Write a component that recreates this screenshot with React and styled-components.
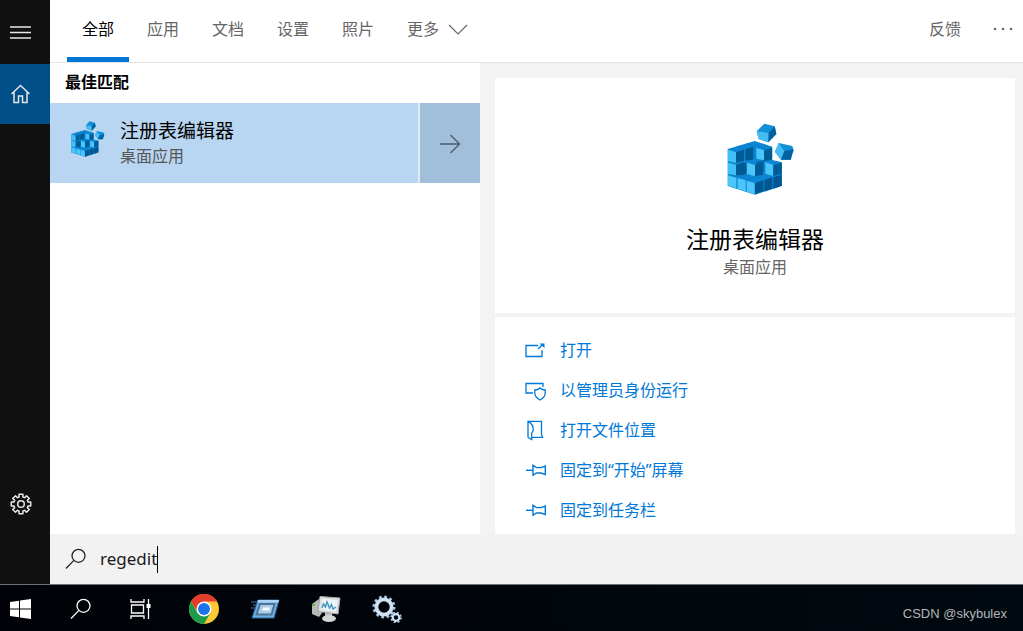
import React, { useState } from 'react';

import styled, { createGlobalStyle } from 'styled-components';

const GlobalStyle = createGlobalStyle`
  * {
    box-sizing: border-box;
  }

  body {
    margin: 0;
    font-family: "Noto Sans", "Noto Sans CJK SC", sans-serif;
    font-size: 16px;
    line-height: 24px;
    color: #000;
  }

  button, input {
    margin: 0;
    padding: 0;
    border: 0;
    background: none;
    font: inherit;
    color: inherit;
  }

  svg {
    display: block;
    flex: none;
  }
`;

const Screen = styled.div`
  display: flex;
  flex-direction: column;
  min-height: 100vh;
`;

const StartPanel = styled.div`
  display: flex;
  flex: 1;
`;

/* left rail */
const Rail = styled.nav`
  display: flex;
  flex-direction: column;
  width: 50px;
  padding-bottom: 50px;
  background: #101010;
`;

const RailButton = styled.button`
  display: flex;
  align-items: center;
  padding-left: 10px;
  height: ${(props) => (props.$tall ? '64px' : '60px')};
  background: ${(props) => (props.$active ? '#004e88' : 'transparent')};
  margin-top: ${(props) => (props.$bottom ? 'auto' : '0')};
  color: #e6e6e6;
`;

const Main = styled.div`
  display: flex;
  flex-direction: column;
  flex: 1;
  min-width: 0;
`;

/* tabs on top */
const TabBar = styled.header`
  display: flex;
  gap: 3px;
  height: 63px;
  padding: 0 8px 0 17px;
  background: #fff;
  border-bottom: 1px solid #e2e2e2;
`;

const Tab = styled.button`
  display: flex;
  align-items: center;
  gap: 9px;
  padding: 0 15px;
  border-bottom: 5px solid ${(props) => (props.$active ? '#0078d7' : 'transparent')};
  color: ${(props) => (props.$active ? '#000' : '#666')};
`;

const TabTools = styled.div`
  display: flex;
  gap: 16px;
  margin-left: auto;
  padding-bottom: 5px;
`;

const ToolButton = styled.button`
  display: flex;
  align-items: center;
  color: #666;
`;

const Body = styled.div`
  display: flex;
  flex: 1;
  background: #f3f3f3;
`;

const Results = styled.section`
  flex: 0 0 430px;
  background: #fff;
`;

const GroupTitle = styled.h2`
  margin: 0;
  padding: 7px 15px 9px;
  font-size: 16px;
  line-height: 24px;
  font-weight: 700;
`;

const ResultRow = styled.div`
  display: flex;
  gap: 2px;
  height: 80px;
  background: #dcebf8;
`;

const ResultItem = styled.button`
  display: flex;
  align-items: center;
  flex: 1;
  gap: 15px;
  padding: 0 15px;
  background: #b8d5f1;
  text-align: left;
`;

const ResultIcon = styled.span`
  align-self: flex-start;
  padding-top: 18px;
`;

const ResultName = styled.span`
  display: block;
  font-size: 19px;
  line-height: 26px;
`;

const ResultKind = styled.span`
  display: block;
  color: #555;
`;

const ResultOpen = styled.button`
  display: flex;
  align-items: center;
  justify-content: center;
  width: 60px;
  background: #a1bfda;
  color: #4a5c6b;
`;

/* right side */
const Details = styled.section`
  display: flex;
  flex-direction: column;
  flex: 1;
  gap: 4px;
  padding: 15px 8px 0 15px;
`;

const AppCard = styled.div`
  display: flex;
  flex-direction: column;
  align-items: center;
  height: 235px;
  padding-top: 45px;
  background: #fff;
`;

const AppName = styled.h1`
  margin: 20px 0 0;
  font-size: 23px;
  line-height: 32px;
  font-weight: 400;
`;

const AppKind = styled.span`
  color: #666;
`;

const ActionCard = styled.div`
  display: flex;
  flex-direction: column;
  flex: 1;
  padding: 13px 0 4px 30px;
  background: #fff;
`;

const Action = styled.button`
  display: flex;
  align-items: center;
  gap: 13px;
  height: 40px;
  color: #0078d7;
`;

const SearchBar = styled.label`
  display: flex;
  align-items: center;
  height: 50px;
  padding-left: 15px;
  background: #f2f2f2;
  color: #222;
`;

const SearchInput = styled.input`
  margin-left: 13px;
  font-size: 17px;
  field-sizing: content;
  outline: none;
  color: #1a1a1a;
`;

const Caret = styled.span`
  width: 1px;
  height: 27px;
  background: #000;
`;

/* bottom */
const TaskBar = styled.footer`
  display: flex;
  align-items: center;
  height: 47px;
  padding-right: 16px;
  border-top: 1px solid #6b7276;
  background: linear-gradient(90deg, #000207, #010910);
  color: #fff;
`;

const TaskButton = styled.button`
  display: flex;
  align-items: center;
  justify-content: ${(props) => (props.$app ? 'center' : 'flex-start')};
  width: ${(props) => (props.$app ? '61px' : '60px')};
  height: 46px;
  padding-left: ${(props) => (props.$app ? '0' : '10px')};
  padding-top: 2px;
`;

const AppButtons = styled.div`
  display: flex;
  margin-left: -7px;
`;

const Watermark = styled.span`
  margin-left: auto;
  padding-top: 11px;
  font-family: "Liberation Sans", Arial, sans-serif;
  font-size: 13px;
  line-height: 16px;
  color: #b4b6b8;
`;

function RegistryIcon({ size }) {
  return (
    <svg width={size} height={size} viewBox="-14 15 240 240">
      {/* block outline is the top color, faces are drawn over it */}
      <path d="M24 93 105 69 158 86V126L187 133V204L106 230 24 204Z" fill="#0c86d3" />
      {/* dark inner sides */}
      <path d="M49 103 73 95V128L49 134Z M77 94 101 86V124L80 128 77 124Z M49 140 73 133 80 138V166L73 170 49 172Z" fill="#005a94" />
      <path d="M110 133 132 126V160L110 168Z" fill="#0068a8" />
      {/* light fronts */}
      <path d="M25 95 49 103V134L25 130Z M25 134 49 140V172L25 168Z" fill="#43bff7" />
      <path d="M25 172 50 179V211L25 203Z M54 180 78 187V220L54 212Z M81 188 105 195V229L81 221Z" fill="#4cc5fa" />
      <path d="M110 90 133 97V127L110 122Z M82 134 106 141V175L82 168Z M137 133 161 141V174L137 167Z" fill="#4cc5fa" />
      {/* dark right sides */}
      <path d="M133 97 157 89V125L133 129Z M106 141 130 134V170L106 175Z M161 141 186 134V167L161 174Z" fill="#005c97" />
      <path d="M106 195 131 187V220L106 229Z M134 186 158 178V212L134 220Z M161 178 186 170V203L161 212Z" fill="#00568f" />
      {/* seams between the top faces */}
      <path d="M51 84 77 93M78 76 104 84M25 170 49 176 78 168M54 180 82 170M81 188 106 176 134 186" fill="none" stroke="#0870b5" strokeWidth="1" />
      {/* two loose cubes */}
      <path d="M134 17 165 25 170 48 146 73 117 63 111 40Z" fill="#1190da" />
      <path d="M111 40 147 45 146 73 117 63Z" fill="#45bdf3" />
      <path d="M147 45 165 25 170 48 146 73Z" fill="#00639f" />
      <path d="M177 75 218 84 222 97 213 125 184 125 166 102Z" fill="#1190da" />
      <path d="M177 75 194 100 184 125 166 102Z" fill="#45bdf3" />
      <path d="M194 100 221 94 213 125 184 125Z" fill="#00639f" />
    </svg>
  );
}

function SearchIcon() {
  return (
    <svg width="22" height="22" viewBox="0 0 22 22" fill="none" stroke="currentColor" strokeWidth="1.3">
      <circle cx="13.500" cy="7.800" r="6.500" />
      <path d="M8.900 12.400 1 20.500" />
    </svg>
  );
}

function OpenIcon() {
  return (
    <svg width="22" height="22" viewBox="0 0 22 22" fill="none" stroke="currentColor" strokeWidth="1.3">
      <path d="M13 6.500H1V17.500H17V11" />
      <path d="M13 10 18 5.500" />
      <path d="M14.500 4.500H19.500V9Z" fill="currentColor" stroke="none" />
    </svg>
  );
}

function AdminIcon() {
  return (
    <svg width="22" height="22" viewBox="0 0 22 22" fill="none" stroke="currentColor" strokeWidth="1.3">
      <path d="M8 14H1V4.500H18V8" />
      <path d="M15 9C13.500 10.500 11.500 11 9.800 11V14C9.800 17.500 12 19.500 15 21C18 19.500 20.200 17.500 20.200 14V11C18.500 11 16.500 10.500 15 9Z" />
    </svg>
  );
}

function FolderIcon() {
  return (
    <svg width="22" height="22" viewBox="0 0 22 22" fill="none" stroke="currentColor" strokeWidth="1.3" strokeLinejoin="round">
      <path d="M3 2.300H16.500V15.700L17.700 18.300H7" />
      <path d="M3 2.300V18.300L6.700 20.700V14L8.300 11.500C8.500 7 6.500 4 3 2.300Z" />
    </svg>
  );
}

function PinIcon() {
  return (
    <svg width="22" height="22" viewBox="0 0 22 22" fill="none" stroke="currentColor" strokeWidth="1.4">
      <path d="M1 11.300H8" />
      <path d="M8 6.300V16.300L11.500 14H16L20.300 15.500V7L16 8.600H11.500Z" />
    </svg>
  );
}

function GearIcon() {
  // ring with eight rounded teeth
  const points = [];
  for (let i = 0; i < 8; i++) {
    const a = (i * Math.PI) / 4;
    [[-0.26, 7.3], [-0.2, 9.9], [0.2, 9.9], [0.26, 7.3]].forEach(([d, r]) => {
      points.push(`${(11 + r * Math.sin(a + d)).toFixed(2)},${(11 - r * Math.cos(a + d)).toFixed(2)}`);
    });
  }
  return (
    <svg width="22" height="22" viewBox="0 0 22 22" fill="none" stroke="currentColor" strokeWidth="1.5" strokeLinejoin="round">
      <polygon points={points.join(' ')} />
      <circle cx="11" cy="11" r="3.3" />
    </svg>
  );
}

function ChromeIcon() {
  return (
    <svg width="30" height="30" viewBox="0 0 30 30">
      <circle cx="15" cy="15" r="15" fill="#fcc934" />
      <path d="M15 15 8.900 18.500 2 7.500A15 15 0 0 1 28 7.500H15Z" fill="#e33b2e" />
      <path d="M2 7.500A15 15 0 0 0 15 30L21.500 18.700 15 15 8.500 18.700Z" fill="#1e9a4b" />
      <circle cx="15" cy="15" r="7.500" fill="#fff" />
      <circle cx="15" cy="15" r="6" fill="#1a73e8" />
    </svg>
  );
}

function RunIcon() {
  return (
    <svg width="30" height="24" viewBox="0 0 30 24">
      <path d="M1 5H8M3 8H7M1 11H6" stroke="#4a78a8" strokeWidth="1" />
      <path d="M8 3H29L24 21H2Z" fill="#6fb0e4" stroke="#2d689f" strokeWidth="1" />
      <path d="M8 3H29L28.200 5.500H7.300Z" fill="#a9d4f2" />
      <path d="M10 7H24.500L21.500 17.500H6.500Z" fill="#a9cde9" stroke="#4f7496" strokeWidth="2" />
      <path d="M13 10.500H20L19.200 13.500H12.200Z" fill="#f2f8fc" />
    </svg>
  );
}

function MonitorIcon() {
  return (
    <svg width="30" height="28" viewBox="0 0 30 28">
      <path d="M1 9 8 4 11 18 8 22 1 19Z" fill="#b8bab9" />
      <path d="M1 9H4V11H1Z" fill="#58bb35" />
      <path d="M9 1.500 29 3 27 19 7 16.500Z" fill="#dfe1e0" stroke="#a5a8a8" strokeWidth="1" />
      <path d="M11.500 4 26.500 5.500 25 16.500 10 14.500Z" fill="#edf4f8" />
      <path d="M11 13 12.500 9 14.500 12 16 7 18.500 13 20.500 9.500 22 14 25 12" fill="none" stroke="#4799c8" strokeWidth="1.500" />
      <path d="M14 18H21V22H14Z" fill="#b9bcbd" />
      <ellipse cx="18" cy="23.500" rx="7" ry="3.500" fill="#d4d6d6" />
    </svg>
  );
}

function ServicesIcon() {
  return (
    <svg width="30" height="28" viewBox="0 0 30 28" fill="none">
      <circle cx="12" cy="12" r="10.200" stroke="#a9c8e2" strokeWidth="2.600" strokeDasharray="2.670 2.670" />
      <circle cx="12" cy="12" r="7.600" stroke="#cfe2f1" strokeWidth="3.800" />
      <circle cx="24" cy="22.500" r="4.800" stroke="#a9c5dc" strokeWidth="2" strokeDasharray="1.900 1.900" />
      <circle cx="24" cy="22.500" r="3.300" stroke="#d3e5f2" strokeWidth="2.200" />
    </svg>
  );
}

const tabs = ['全部', '应用', '文档', '设置', '照片'];

const actions = [
  { text: '打开', icon: <OpenIcon /> },
  { text: '以管理员身份运行', icon: <AdminIcon /> },
  { text: '打开文件位置', icon: <FolderIcon /> },
  { text: '固定到“开始”屏幕', icon: <PinIcon /> },
  { text: '固定到任务栏', icon: <PinIcon /> },
];

function App() {
  let [tab, setTab] = useState('全部');
  let [keyword, setKeyword] = useState('regedit');

  return (
    <>
      <GlobalStyle />
      <Screen>
        <StartPanel>
          <Rail>
            <RailButton $tall aria-label="菜单">
              <svg width="21" height="14" viewBox="0 0 21 14" fill="none" stroke="currentColor" strokeWidth="1.4">
                <path d="M0 2H21M0 7.500H21M0 13H21" />
              </svg>
            </RailButton>
            <RailButton $active aria-label="主页">
              <svg width="20" height="20" viewBox="0 0 20 20" fill="none" stroke="currentColor" strokeWidth="1.5">
                <path d="M1.500 10 10.500 1.500 19.500 10M4 8V18.500H8.500V12H12.500V18.500H17V8" />
              </svg>
            </RailButton>
            <RailButton $bottom aria-label="设置">
              <GearIcon />
            </RailButton>
          </Rail>

          <Main>
            <TabBar>
              {tabs.map((x) => (
                <Tab key={x} $active={x === tab} onClick={() => { setTab(x) }}>{x}</Tab>
              ))}
              <Tab>
                更多
                <svg width="20" height="12" viewBox="0 0 20 12" fill="none" stroke="currentColor" strokeWidth="1.2">
                  <path d="M1 2 10 11 19 2" />
                </svg>
              </Tab>
              <TabTools>
                <ToolButton>反馈</ToolButton>
                <ToolButton aria-label="选项">
                  <svg width="38" height="4" viewBox="0 0 38 4" fill="currentColor">
                    <circle cx="18" cy="2" r="1.300" />
                    <circle cx="26" cy="2" r="1.300" />
                    <circle cx="34" cy="2" r="1.300" />
                  </svg>
                </ToolButton>
              </TabTools>
            </TabBar>

            <Body>
              <Results>
                <GroupTitle>最佳匹配</GroupTitle>
                <ResultRow>
                  <ResultItem>
                    <ResultIcon><RegistryIcon size={40} /></ResultIcon>
                    <span>
                      <ResultName>注册表编辑器</ResultName>
                      <ResultKind>桌面应用</ResultKind>
                    </span>
                  </ResultItem>
                  <ResultOpen aria-label="展开">
                    <svg width="22" height="22" viewBox="0 0 22 22" fill="none" stroke="currentColor" strokeWidth="1.3">
                      <path d="M1 12H20.500M11.500 3 20.500 12 11.500 21" />
                    </svg>
                  </ResultOpen>
                </ResultRow>
              </Results>

              <Details>
                <AppCard>
                  <RegistryIcon size={80} />
                  <AppName>注册表编辑器</AppName>
                  <AppKind>桌面应用</AppKind>
                </AppCard>
                <ActionCard>
                  {actions.map((x) => (
                    <Action key={x.text}>
                      {x.icon}
                      {x.text}
                    </Action>
                  ))}
                </ActionCard>
              </Details>
            </Body>

            <SearchBar>
              <SearchIcon />
              <SearchInput aria-label="搜索" value={keyword} onChange={(e) => { setKeyword(e.target.value) }} />
              <Caret />
            </SearchBar>
          </Main>
        </StartPanel>

        <TaskBar>
          <TaskButton aria-label="开始">
            <svg width="21" height="20" viewBox="0 0 21 20" fill="#fff">
              <path d="M0 3 9 1.700V9.500H0ZM10 1.500 21 0V9.500H10ZM0 10.500H9V18.300L0 17ZM10 10.500H21V20L10 18.500Z" />
            </svg>
          </TaskButton>
          <TaskButton aria-label="搜索">
            <SearchIcon />
          </TaskButton>
          <TaskButton aria-label="任务视图">
            <svg width="22" height="20" viewBox="0 0 22 20" fill="none" stroke="#fff" strokeWidth="1.3">
              <path d="M1 0V3H14V0M1 20V17H14V20M1.500 6H13.500V14H1.500ZM18.500 0V20" />
              <path d="M16.500 5H20.500V9H16.500Z" fill="#fff" stroke="none" />
            </svg>
          </TaskButton>
          <AppButtons>
            <TaskButton $app aria-label="Chrome"><ChromeIcon /></TaskButton>
            <TaskButton $app aria-label="运行"><RunIcon /></TaskButton>
            <TaskButton $app aria-label="性能监视器"><MonitorIcon /></TaskButton>
            <TaskButton $app aria-label="服务"><ServicesIcon /></TaskButton>
          </AppButtons>
          <Watermark>CSDN @skybulex</Watermark>
        </TaskBar>
      </Screen>
    </>
  );
}

export default App;
